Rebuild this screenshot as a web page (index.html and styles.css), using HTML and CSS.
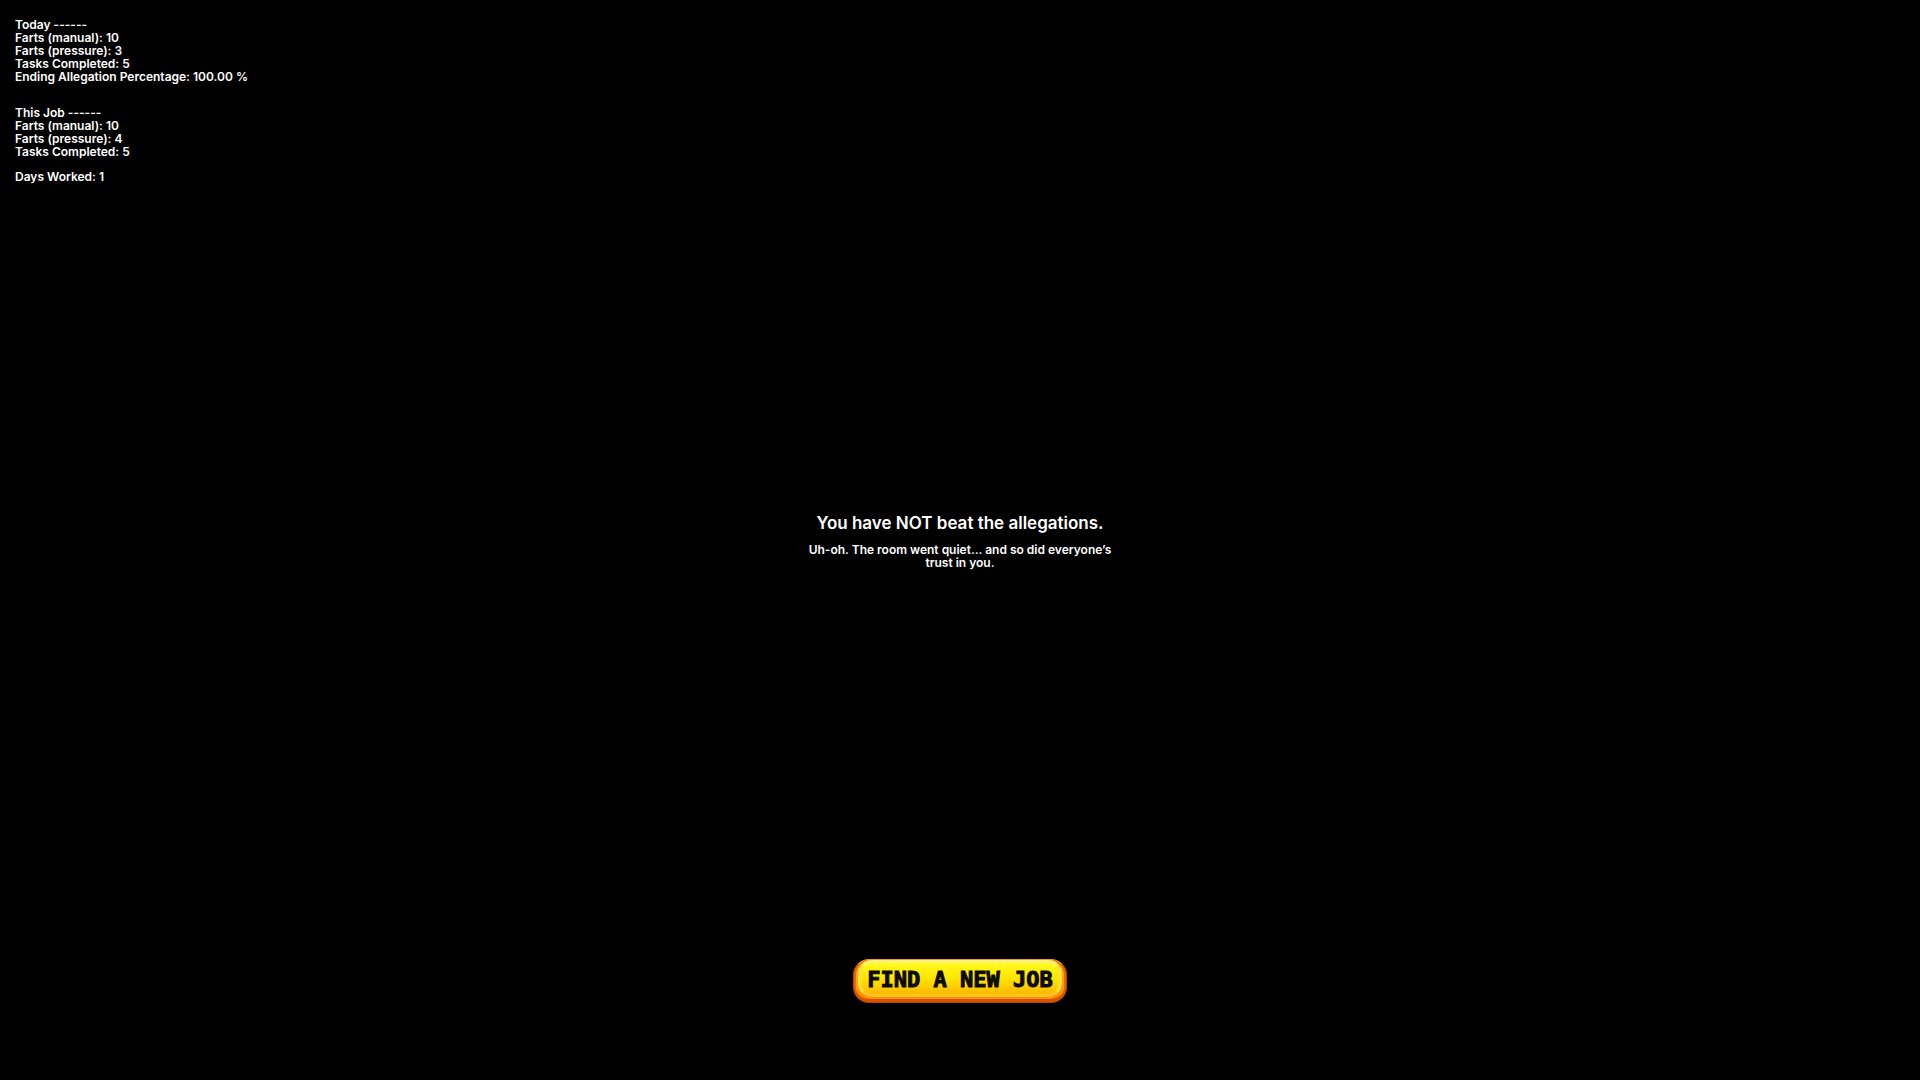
FILE: index.html
```
<!DOCTYPE html>
<html lang="en">

<head>
    <meta charset="utf-8">
    <meta name="viewport" content="width=device-width, initial-scale=1.0">

    <title>Game Over</title>

    <link rel="stylesheet" href="styles.css">
</head>

<body>
    <section class="stats">
        <div class="today">
            <p>Today ------</p>
            <p>Farts (manual): 10</p>
            <p>Farts (pressure): 3</p>
            <p>Tasks Completed: 5</p>
            <p>Ending Allegation Percentage: 100.00 %</p>
        </div>
        <div class="job">
            <p>This Job ------</p>
            <p>Farts (manual): 10</p>
            <p>Farts (pressure): 4</p>
            <p>Tasks Completed: 5</p>
            <p class="days">Days Worked: 1</p>
        </div>
    </section>

    <main class="result">
        <h1>You have NOT beat the allegations.</h1>
        <p>Uh-oh. The room went quiet... and so did everyone’s trust in you.</p>
    </main>

    <footer>
        <button type="button" class="new-job"><span>FIND A NEW JOB</span></button>
    </footer>
</body>

</html>
```

FILE: styles.css
```
* {
    box-sizing: border-box;
}

body {
    margin: 0;
    min-height: 100vh;
    display: grid;
    grid-template-rows: 1fr auto 1fr;
    background: #000;
    color: #fff;
    font-family: Inter, "Liberation Sans", sans-serif;
    font-size: 12px;
    font-weight: 600;
    line-height: 13px;
}

h1,
p {
    margin: 0;
}

.stats {
    padding: 18px 15px;
}

.job {
    margin-top: 23px;
}

.days {
    margin-top: 12px;
}

.result {
    width: 320px;
    margin: 0 auto;
    padding-top: 2px;
    text-align: center;
}

.result h1 {
    margin-bottom: 10px;
    font-size: 17px;
    font-weight: 600;
    line-height: 20px;
    white-space: nowrap;
}

footer {
    display: flex;
    justify-content: center;
    align-items: flex-end;
    padding-bottom: 77px;
}

.new-job {
    padding: 0 4px 5px;
    border: 1px solid #b84300;
    border-top-color: #f09a18;
    border-radius: 16px;
    background: linear-gradient(#ffb61c, #ff9a10 60%, #f58a08);
    box-shadow: inset 0 -3px 0 #d95200, inset 2px 0 0 #e06a08, inset -2px 0 0 #e06a08;
    cursor: pointer;
}

/* light rim inside the orange edge */
.new-job span {
    display: block;
    padding: 2px 6px 0;
    border: 3px solid #ffe13a;
    border-top-color: #fff27a;
    border-bottom-color: #ffc520;
    border-radius: 14px;
    background: linear-gradient(#fffb20, #ffe500 50%, #ffb700);
    color: #0c0a00;
    font-family: "DejaVu Sans Mono", monospace;
    font-size: 22px;
    font-weight: bold;
    line-height: 29px;
    white-space: nowrap;
    -webkit-text-stroke: 1px #0c0a00;
}
```
